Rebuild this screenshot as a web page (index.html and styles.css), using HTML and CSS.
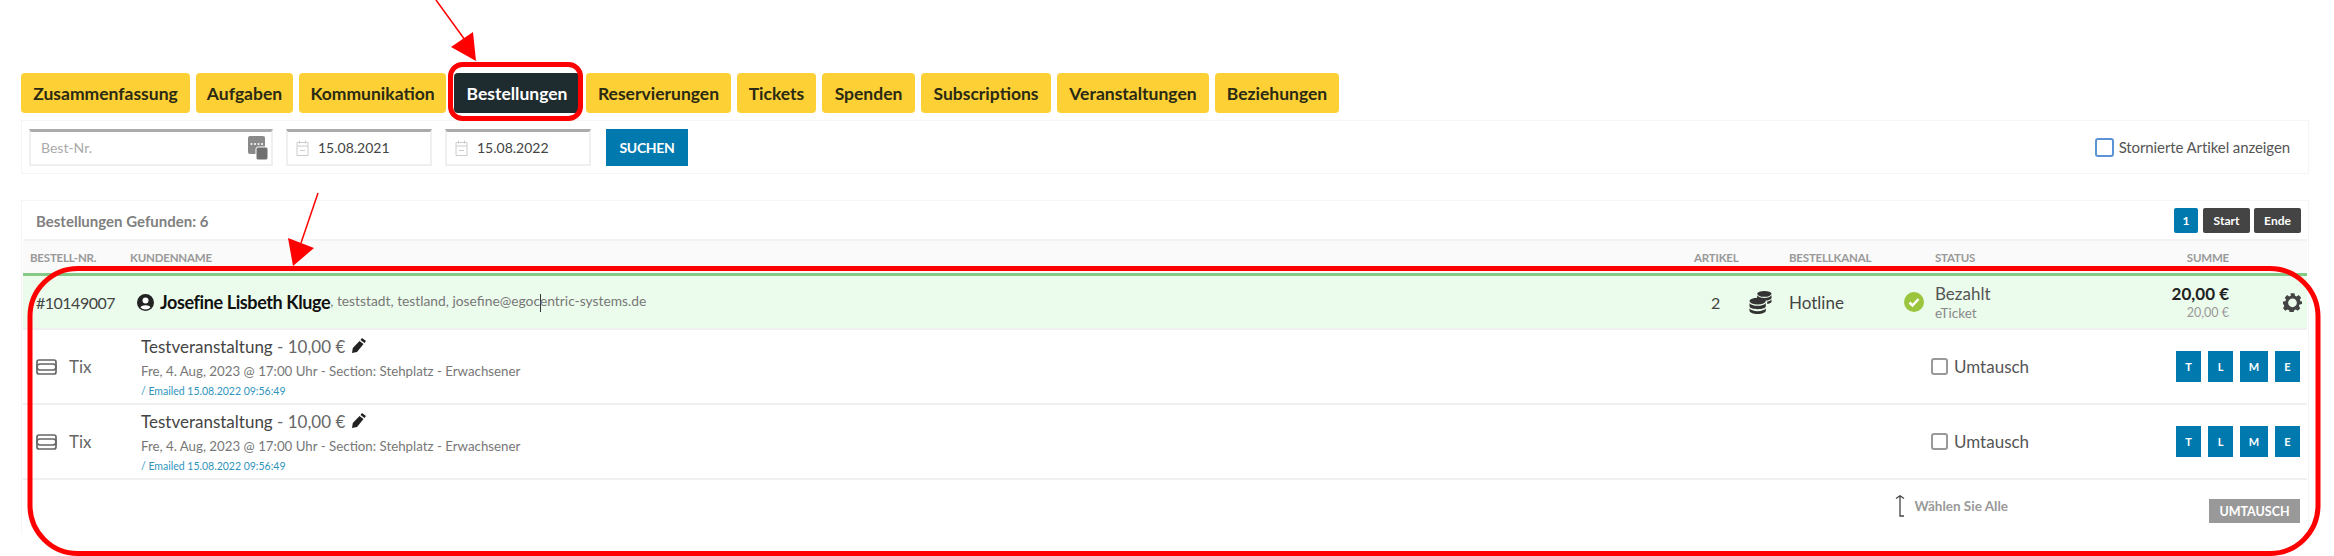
FILE: index.html
```html
<!DOCTYPE html>
<html lang="de">
<head>
    <meta charset="UTF-8">
    <title>Bestellungen</title>
    <link rel="stylesheet" href="styles.css">
</head>
<body>
    <div class="page">
        <!-- Tabs -->
        <div class="tabs">
            <a class="tab tab-zus">Zusammenfassung</a>
            <a class="tab tab-auf">Aufgaben</a>
            <a class="tab tab-kom">Kommunikation</a>
            <a class="tab tab-active">Bestellungen</a>
            <a class="tab tab-res">Reservierungen</a>
            <a class="tab tab-tic">Tickets</a>
            <a class="tab tab-spe">Spenden</a>
            <a class="tab tab-sub">Subscriptions</a>
            <a class="tab tab-ver">Veranstaltungen</a>
            <a class="tab tab-bez">Beziehungen</a>
        </div>

        <!-- Filter -->
        <div class="filter">
            <div class="field field-nr">
                <span class="placeholder">Best-Nr.</span>
                <svg class="nr-icon" width="20" height="24" viewBox="0 0 20 24">
                    <rect x="0" y="0" width="17" height="18" rx="2" fill="#8a8a8a"/>
                    <rect x="8" y="11" width="12" height="13" rx="2" fill="#6f6f6f" stroke="#fff"/>
                    <circle cx="3.500" cy="8" r="1" fill="#fff"/><circle cx="7" cy="8" r="1" fill="#fff"/><circle cx="10.500" cy="8" r="1" fill="#fff"/><circle cx="14" cy="8" r="1" fill="#fff"/>
                </svg>
            </div>
            <div class="field field-date">
                <svg class="cal-icon" width="13" height="16" viewBox="0 0 13 16"><path d="M1 2.500h11v13H1zM1 6h11M3.500 .5v3M9.500 .5v3M4 10.500h5" fill="none" stroke="#ccc"/></svg>
                <span>15.08.2021</span>
            </div>
            <div class="field field-date">
                <svg class="cal-icon" width="13" height="16" viewBox="0 0 13 16"><path d="M1 2.500h11v13H1zM1 6h11M3.500 .5v3M9.500 .5v3M4 10.500h5" fill="none" stroke="#ccc"/></svg>
                <span>15.08.2022</span>
            </div>
            <button class="btn-search">SUCHEN</button>
            <label class="storno"><span class="storno-box"></span>Stornierte Artikel anzeigen</label>
        </div>

        <!-- Bestellungen -->
        <div class="panel">
            <div class="panel-head">
                <span class="found">Bestellungen Gefunden: 6</span>
                <div class="pager">
                    <span class="page-btn page-cur">1</span>
                    <span class="page-btn">Start</span>
                    <span class="page-btn">Ende</span>
                </div>
            </div>

            <div class="row thead">
                <div class="c-nr">BESTELL-NR.</div>
                <div class="c-name">KUNDENNAME</div>
                <div class="c-art">ARTIKEL</div>
                <div class="c-kanal">BESTELLKANAL</div>
                <div class="c-status">STATUS</div>
                <div class="c-sum">SUMME</div>
                <div class="c-act"></div>
            </div>

            <div class="row order">
                <div class="c-nr order-nr">#10149007</div>
                <div class="c-name customer">
                    <svg class="person" width="17" height="17" viewBox="0 0 17 17"><circle cx="8.500" cy="8.500" r="8.500" fill="#222"/><circle cx="8.500" cy="6.500" r="3" fill="#fff"/><path d="M3.500 13.500c.8-3 9.200-3 10 0a7 7 0 0 1-10 0z" fill="#fff"/></svg>
                    <strong>Josefine Lisbeth Kluge</strong><span class="cust-info">, teststadt, testland, josefine@egoc<i class="caret"></i>entric-systems.de</span>
                </div>
                <div class="c-art order-art">2</div>
                <div class="c-kanal kanal">
                    <svg class="coins" width="24" height="25" viewBox="0 0 25 25" fill="#333">
                        <ellipse cx="16" cy="3.500" rx="7.500" ry="3"/><path d="M8.500 5v2.500c0 1.700 3.400 3 7.500 3s7.500-1.300 7.500-3V5c-1 1.700-4 2.800-7.500 2.800S9.500 6.700 8.500 5z"/>
                        <ellipse cx="9" cy="11" rx="8.500" ry="3.500"/><path d="M.5 13v3.500c0 1.700 3.800 3 8.500 3s8.500-1.300 8.500-3V13c-1 1.700-4.500 3-8.500 3S1.500 14.700.5 13zM.5 18.500V21c0 1.900 3.800 3.500 8.500 3.500s8.500-1.600 8.500-3.500v-2.500c-1 1.700-4.500 3-8.500 3s-7.500-1.300-8.500-3zM19 11.500c2-.3 3.700-1 4.500-2v2.500c-.8 1-2.500 1.700-4.500 2z"/>
                    </svg>
                    <span>Hotline</span>
                </div>
                <div class="c-status status">
                    <svg class="check" width="20" height="20" viewBox="0 0 20 20"><circle cx="10" cy="10" r="10" fill="#9bc53d"/><path d="M5.500 10.500l3 3 6-6.500" fill="none" stroke="#fff" stroke-width="2.500"/></svg>
                    <div><div class="status-main">Bezahlt</div><div class="status-sub">eTicket</div></div>
                </div>
                <div class="c-sum sum"><div class="sum-main">20,00 €</div><div class="sum-sub">20,00 €</div></div>
                <div class="c-act">
                    <svg class="gear" width="19" height="20" viewBox="0 0 24 24"><path fill="#444" fill-rule="evenodd" d="M9.500 1h5l.7 3 2 .9 2.700-1.600 3 3.200-1.700 2.600.9 2-.1 0L24 11.500v3l-3 .7-.9 2 1.700 2.600-3 3.200-2.700-1.600-2 .9-.7 3h-5l-.7-3-2-.9-2.700 1.600-3-3.200 1.700-2.600-.9-2L0 14.500v-3l3-.4.900-2-1.700-2.600 3-3.200 2.700 1.600 2-.9zM12 7.500a5.500 5.500 0 1 0 0 11 5.500 5.500 0 0 0 0-11z"/></svg>
                </div>
            </div>

            <div class="row item">
                <div class="c-nr tix">
                    <svg class="ticket" width="21" height="16" viewBox="0 0 21 16"><rect x="1" y="1" width="19" height="14" rx="2" fill="none" stroke="#666" stroke-width="1.700"/><rect x="1" y="5" width="19" height="6" rx="3" fill="#fff" stroke="#666" stroke-width="1.700"/></svg>
                    <span>Tix</span>
                </div>
                <div class="c-name item-info">
                    <div class="item-title">Testveranstaltung <span class="item-price">- 10,00 €</span>
                        <svg class="pencil" width="14" height="15" viewBox="0 0 14 15"><path d="M10 0l4 3-1.500 2-4-3zM7.500 3l4 3-6.500 8-5 1 .8-5z" fill="#222"/></svg>
                    </div>
                    <div class="item-date">Fre, 4. Aug, 2023 @ 17:00 Uhr - Section: Stehplatz - Erwachsener</div>
                    <div class="item-mail">/ Emailed 15.08.2022 09:56:49</div>
                </div>
                <div class="c-art"></div>
                <div class="c-kanal"></div>
                <label class="c-status exchange"><span class="ex-box"></span>Umtausch</label>
                <div class="c-tools">
                    <span class="tool">T</span>
                    <span class="tool">L</span>
                    <span class="tool tool-m">M</span>
                    <span class="tool">E</span>
                </div>
            </div>

            <div class="row item">
                <div class="c-nr tix">
                    <svg class="ticket" width="21" height="16" viewBox="0 0 21 16"><rect x="1" y="1" width="19" height="14" rx="2" fill="none" stroke="#666" stroke-width="1.700"/><rect x="1" y="5" width="19" height="6" rx="3" fill="#fff" stroke="#666" stroke-width="1.700"/></svg>
                    <span>Tix</span>
                </div>
                <div class="c-name item-info">
                    <div class="item-title">Testveranstaltung <span class="item-price">- 10,00 €</span>
                        <svg class="pencil" width="14" height="15" viewBox="0 0 14 15"><path d="M10 0l4 3-1.500 2-4-3zM7.500 3l4 3-6.500 8-5 1 .8-5z" fill="#222"/></svg>
                    </div>
                    <div class="item-date">Fre, 4. Aug, 2023 @ 17:00 Uhr - Section: Stehplatz - Erwachsener</div>
                    <div class="item-mail">/ Emailed 15.08.2022 09:56:49</div>
                </div>
                <div class="c-art"></div>
                <div class="c-kanal"></div>
                <label class="c-status exchange"><span class="ex-box"></span>Umtausch</label>
                <div class="c-tools">
                    <span class="tool">T</span>
                    <span class="tool">L</span>
                    <span class="tool tool-m">M</span>
                    <span class="tool">E</span>
                </div>
            </div>

            <div class="panel-foot">
                <div class="select-all">
                    <svg class="up-arrow" width="13" height="22" viewBox="0 0 13 22"><path d="M2 3.500L6 .8l4 2.700M6 1v20h4" fill="none" stroke="#444" stroke-width="1.300"/></svg>
                    <span>Wählen Sie Alle</span>
                </div>
                <button class="btn-exchange">UMTAUSCH</button>
            </div>
        </div>
    </div>

    <!-- Annotations drawn over the screenshot -->
    <svg class="marks" width="2334" height="556" viewBox="0 0 2334 556">
        <rect x="450.500" y="64.500" width="130" height="54" rx="12" fill="none" stroke="#f00" stroke-width="5"/>
        <rect x="30" y="268.500" width="2288" height="285" rx="48" fill="none" stroke="#f00" stroke-width="5"/>
        <path d="M436 0L465 40" fill="none" stroke="#f00" stroke-width="1.500"/>
        <path d="M476 61L451 47L473 32z" fill="#f00"/>
        <path d="M318 193L301 243" fill="none" stroke="#f00" stroke-width="1.500"/>
        <path d="M293 266L288 238L314 248z" fill="#f00"/>
    </svg>
</body>
</html>
```

FILE: styles.css
```css
body {
    margin: 0;
    background-color: #fff;
    font-family: Lato, "Liberation Sans", sans-serif;
    color: #333;
}
.page {
    height: 556px;
    padding: 73px 25px 0 21px;
    box-sizing: border-box;
    overflow: hidden;
}
.marks {
    position: absolute;
    left: 0;
    top: 0;
    pointer-events: none;
}

/* tabs */
.tabs {
    display: flex;
    gap: 6px;
    height: 40px;
}
.tab {
    display: flex;
    align-items: center;
    justify-content: center;
    background-color: #fdd036;
    color: #2b2a12;
    border-radius: 4px;
    font-size: 17.500px;
    font-weight: bold;
}
.tab-zus { width: 169px; }
.tab-auf { width: 97px; }
.tab-kom { width: 147px; }
.tab-active {
    width: 126px;
    margin-left: 2px;
    background-color: #1f2c2f;
    color: #fff;
}
.tab-res { width: 145px; }
.tab-tic { width: 79px; }
.tab-spe { width: 93px; }
.tab-sub { width: 130px; }
.tab-ver { width: 152px; }
.tab-bez { width: 124px; }

/* filter row */
.filter {
    display: flex;
    align-items: center;
    height: 54px;
    margin-top: 7px;
    padding: 0 18px 0 7px;
    border: 1px solid #f5f5f5;
    box-sizing: border-box;
}
.field {
    display: flex;
    align-items: center;
    height: 37px;
    box-sizing: border-box;
    border: 2px solid #efefef;
    border-top: 3px solid #ababab;
    font-size: 14px;
    color: #444;
}
.field-nr {
    width: 244px;
    justify-content: space-between;
    padding: 0 3px 0 10px;
}
.placeholder {
    color: #aaa;
    font-size: 14px;
}
.field-date {
    width: 146px;
    margin-left: 13px;
    padding-left: 8px;
}
.cal-icon {
    margin-right: 9px;
}
.btn-search {
    width: 82px;
    height: 37px;
    margin-left: 15px;
    border: 0;
    background-color: #0079ae;
    color: #fff;
    font-family: inherit;
    font-size: 14px;
    font-weight: bold;
    letter-spacing: -.3px;
}
.storno {
    display: flex;
    align-items: center;
    margin-left: auto;
    font-size: 15px;
    letter-spacing: -.1px;
    color: #555;
}
.storno-box {
    width: 19px;
    height: 19px;
    margin-right: 5px;
    border: 2px solid #5b93d6;
    border-radius: 3px;
    box-sizing: border-box;
}

/* panel */
.panel {
    height: 334px;
    margin-top: 26px;
    padding: 0 1px;
    border: 1px solid #f5f5f5;
    border-bottom: 0;
    box-sizing: border-box;
}
.panel-head {
    display: flex;
    align-items: center;
    justify-content: space-between;
    height: 37px;
    padding: 1px 6px 0 13px;
    border-bottom: 2px solid #f3f3f3;
}
.found {
    font-size: 15px;
    font-weight: bold;
    color: #808080;
}
.pager {
    display: flex;
    gap: 4px;
}
.page-btn {
    display: flex;
    align-items: center;
    justify-content: center;
    width: 47px;
    height: 25px;
    background-color: #444;
    border-radius: 2px;
    color: #fff;
    font-size: 12px;
    font-weight: bold;
}
.page-cur {
    width: 24px;
    margin-right: 1px;
    background-color: #0079ae;
}

/* shared row grid */
.row {
    display: grid;
    grid-template-columns: 100px 1564px 95px 146px 194px 100px 78px;
    align-items: center;
    padding-left: 7px;
}
.c-sum {
    text-align: right;
}
.c-act {
    display: flex;
    padding-left: 54px;
}
.thead {
    height: 32px;
    background-color: #fafafa;
    border-bottom: 3px solid #86c986;
    font-size: 11.500px;
    font-weight: bold;
    letter-spacing: -.2px;
    color: #999;
}
.order {
    height: 52px;
    background-color: #ecfcec;
    border-bottom: 2px solid #f0f0f0;
}
.order-nr {
    padding-left: 6px;
    font-size: 16px;
    letter-spacing: -.5px;
    color: #444;
}
.customer {
    display: flex;
    align-items: center;
    padding-left: 7px;
}
.person {
    margin-right: 6px;
}
.customer strong {
    font-size: 18px;
    letter-spacing: -.4px;
    color: #111;
}
.cust-info {
    font-size: 13.800px;
    color: #777;
}
.caret {
    display: inline-block;
    height: 18px;
    margin-right: -1px;
    border-left: 1px solid #333;
    vertical-align: middle;
}
.order-art {
    padding-left: 17px;
    font-size: 16px;
    color: #444;
}
.kanal {
    display: flex;
    align-items: center;
    gap: 16px;
    margin-left: -40px;
    font-size: 17px;
    color: #444;
}
.status {
    display: flex;
    align-items: center;
    gap: 11px;
    margin-left: -31px;
}
.status-main { font-size: 17px; line-height: 22px; color: #555; }
.status-sub { font-size: 13.500px; line-height: 16px; color: #888; }
.sum-main { font-size: 17px; line-height: 22px; font-weight: bold; color: #222; }
.sum-sub { font-size: 12.500px; line-height: 16px; color: #999; }

.item {
    height: 73px;
    border-bottom: 2px solid #f0f0f0;
}
.tix {
    display: flex;
    align-items: center;
    gap: 12px;
    padding-left: 6px;
    font-size: 17px;
    color: #666;
}
.item-info {
    padding-left: 11px;
}
.item-title {
    font-size: 17px;
    line-height: 26px;
    color: #444;
}
.item-price { color: #666; }
.pencil { margin-left: 2px; }
.item-date {
    font-size: 13.300px;
    line-height: 22px;
    color: #777;
}
.item-mail {
    font-size: 10.500px;
    line-height: 18px;
    color: #2f94bd;
}
.exchange {
    display: flex;
    align-items: center;
    margin-left: -4px;
    font-size: 17px;
    color: #555;
}
.ex-box {
    width: 17px;
    height: 17px;
    margin-right: 6px;
    border: 2px solid #999;
    border-radius: 3px;
    box-sizing: border-box;
}
.c-tools {
    display: flex;
    gap: 7px;
    grid-column: 6 / 8;
    justify-self: end;
    margin-right: 7px;
}
.tool {
    display: flex;
    align-items: center;
    justify-content: center;
    width: 25px;
    height: 31px;
    background-color: #0079ae;
    color: #fff;
    font-size: 11px;
    font-weight: bold;
}
.tool-m { width: 28px; }

.panel-foot {
    display: flex;
    justify-content: flex-end;
    height: 52px;
    padding: 19px 7px 0 0;
    box-sizing: border-box;
}
.select-all {
    display: flex;
    align-items: center;
    gap: 8px;
    height: 22px;
    margin-top: -4px;
    margin-right: 201px;
    font-size: 13.500px;
    font-weight: bold;
    color: #999;
}
.btn-exchange {
    width: 91px;
    height: 24px;
    border: 0;
    background-color: #999;
    color: #fff;
    font-family: inherit;
    font-size: 12.500px;
    font-weight: bold;
}
```
